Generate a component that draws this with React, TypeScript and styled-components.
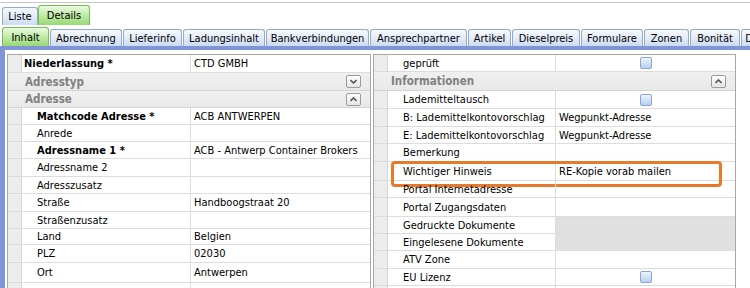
import React from "react";
import styled, { createGlobalStyle } from "styled-components";

const Global = createGlobalStyle`
  html, body { margin: 0; padding: 0; background: #ffffff; }
  body {
    font-family: "DejaVu Sans Condensed", "DejaVu Sans", sans-serif;
    font-stretch: condensed;
    font-size: 11px;
    color: #000;
  }
  * { box-sizing: border-box; }
`;

const Page = styled.div`
  width: 750px;
  height: 288px;
  overflow: hidden;
  padding-top: 2px;
  background: #fff;
`;

const TopTabBar = styled.div`
  border-top: 1px solid #c6c6c6;
  height: 23px;
  display: flex;
  align-items: flex-end;
  padding-left: 2px;
`;

const SubTabBar = styled.div`
  margin-top: 2px;
  height: 19px;
  display: flex;
  align-items: flex-end;
  gap: 1px;
  padding-left: 2px;
  white-space: nowrap;
  overflow: hidden;
`;

const Tab = styled.div<{ $active?: boolean; $h: number; $w: number }>`
  flex: none;
  width: ${(p) => p.$w}px;
  height: ${(p) => (p.$active ? p.$h + 2 : p.$h)}px;
  display: flex;
  align-items: center;
  justify-content: center;
  border: 1px solid ${(p) => (p.$active ? "#78bd55" : "#93aacb")};
  border-bottom: none;
  border-radius: 3px 3px 0 0;
  background: ${(p) =>
    p.$active
      ? "linear-gradient(#eafbe0 0%, #c4ecac 45%, #98d873 100%)"
      : "linear-gradient(#f6f9fe 0%, #e3ecf9 50%, #c9dbf3 100%)"};
  color: #000;
  font-size: 11px;
`;

const Frame = styled.div`
  border-top: 4px solid #7f95d8;
  border-left: 5px solid #7f95d8;
  padding: 4px 0 0 2px;
  display: flex;
  gap: 2px;
  height: 250px;
`;

const Panel = styled.div<{ $w: number; $labelW: number }>`
  --label-w: ${(p) => p.$labelW}px;
  width: ${(p) => p.$w}px;
  flex: none;
  border: 1px solid #a7a7a7;
  border-bottom: none;
  background: #fff;
  display: flex;
  flex-direction: column;
`;

const Row = styled.div<{ $h: number }>`
  position: relative;
  display: flex;
  height: ${(p) => p.$h}px;
  flex: none;
  border-bottom: 1px solid #dcdcdc;
`;

const Gutter = styled.div`
  width: 14px;
  flex: none;
  background: #ececec;
  border-right: 1px solid #d6d6d6;
`;

const Label = styled.div<{ $indent: number; $bold?: boolean }>`
  width: var(--label-w);
  flex: none;
  padding-left: ${(p) => p.$indent}px;
  display: flex;
  align-items: center;
  border-right: 1px solid #dcdcdc;
  font-weight: ${(p) => (p.$bold ? "bold" : "normal")};
  white-space: nowrap;
  overflow: hidden;
`;

const Value = styled.div<{ $shaded?: boolean; $center?: boolean }>`
  flex: 1;
  padding-left: 3px;
  display: flex;
  align-items: center;
  justify-content: ${(p) => (p.$center ? "center" : "flex-start")};
  background: ${(p) => (p.$shaded ? "#e0e0e0" : "transparent")};
  white-space: nowrap;
  overflow: hidden;
`;

const GroupRow = styled.div<{ $h: number }>`
  display: flex;
  align-items: center;
  justify-content: space-between;
  height: ${(p) => p.$h}px;
  flex: none;
  padding: 0 9px 0 17px;
  background: linear-gradient(#f0f0f0, #e9e9e9);
  border-bottom: 1px solid #d4d4d4;
  color: #808080;
  font-weight: bold;
  font-size: 11.5px;
`;

const ToggleButton = styled.div`
  width: 15px;
  height: 13px;
  border: 1px solid #9c9c9c;
  border-radius: 2px;
  background: linear-gradient(#ffffff, #e4e4e4);
  display: flex;
  align-items: center;
  justify-content: center;
`;

const CheckBox = styled.div`
  width: 12px;
  height: 12px;
  border: 1px solid #87a6d6;
  border-radius: 2px;
  background: linear-gradient(#eef4fd, #b8cfef);
  margin-left: -3px;
`;

const Highlight = styled.div`
  position: absolute;
  left: 17px;
  top: -1px;
  width: 331px;
  height: 26px;
  border: 3px solid #e8792a;
  border-radius: 4px;
  pointer-events: none;
`;

const Chevron = ({ up }: { up?: boolean }) => (
  <svg width="7" height="5" viewBox="0 0 7 5">
    <polyline
      points={up ? "0.5,4 3.5,1 6.5,4" : "0.5,1 3.5,4 6.5,1"}
      fill="none"
      stroke="#555"
      strokeWidth="1.6"
    />
  </svg>
);

type Item =
  | { kind: "group"; text: string; h: number; up?: boolean }
  | {
      kind: "row";
      label: string;
      value?: string;
      h: number;
      indent: number;
      bold?: boolean;
      check?: boolean;
      shaded?: boolean;
      highlight?: boolean;
    };

const leftItems: Item[] = [
  { kind: "row", label: "Niederlassung *", value: "CTD GMBH", h: 18, indent: 2, bold: true },
  { kind: "group", text: "Adresstyp", h: 18 },
  { kind: "group", text: "Adresse", h: 17, up: true },
  { kind: "row", label: "Matchcode Adresse *", value: "ACB ANTWERPEN", h: 17, indent: 15, bold: true },
  { kind: "row", label: "Anrede", h: 17, indent: 15 },
  { kind: "row", label: "Adressname 1 *", value: "ACB - Antwerp Container Brokers", h: 17, indent: 15, bold: true },
  { kind: "row", label: "Adressname 2", h: 18, indent: 15 },
  { kind: "row", label: "Adresszusatz", h: 17, indent: 15 },
  { kind: "row", label: "Straße", value: "Handboogstraat 20", h: 18, indent: 15 },
  { kind: "row", label: "Straßenzusatz", h: 17, indent: 15 },
  { kind: "row", label: "Land", value: "Belgien", h: 16, indent: 15 },
  { kind: "row", label: "PLZ", value: "02030", h: 18, indent: 15 },
  { kind: "row", label: "Ort", value: "Antwerpen", h: 20, indent: 15 },
  { kind: "row", label: "", h: 18, indent: 15 },
];

const rightItems: Item[] = [
  { kind: "row", label: "geprüft", h: 17, indent: 15, check: true },
  { kind: "group", text: "Informationen", h: 19, up: true },
  { kind: "row", label: "Lademitteltausch", h: 18, indent: 15, check: true },
  { kind: "row", label: "B: Lademittelkontovorschlag", value: "Wegpunkt-Adresse", h: 18, indent: 15 },
  { kind: "row", label: "E: Lademittelkontovorschlag", value: "Wegpunkt-Adresse", h: 17, indent: 15 },
  { kind: "row", label: "Bemerkung", h: 18, indent: 15 },
  { kind: "row", label: "Wichtiger Hinweis", value: "RE-Kopie vorab mailen", h: 19, indent: 15, highlight: true },
  { kind: "row", label: "Portal Internetadresse", h: 17, indent: 15 },
  { kind: "row", label: "Portal Zugangsdaten", h: 19, indent: 15 },
  { kind: "row", label: "Gedruckte Dokumente", h: 17, indent: 15, shaded: true },
  { kind: "row", label: "Eingelesene Dokumente", h: 17, indent: 15, shaded: true },
  { kind: "row", label: "ATV Zone", h: 18, indent: 15 },
  { kind: "row", label: "EU Lizenz", h: 17, indent: 15, check: true },
  { kind: "row", label: "", h: 17, indent: 15 },
];

const PanelView = ({ items, w, labelW }: { items: Item[]; w: number; labelW: number }) => (
  <Panel $w={w} $labelW={labelW}>
    {items.map((it, i) =>
      it.kind === "group" ? (
        <GroupRow key={i} $h={it.h}>
          <span>{it.text}</span>
          <ToggleButton>
            <Chevron up={it.up} />
          </ToggleButton>
        </GroupRow>
      ) : (
        <Row key={i} $h={it.h}>
          <Gutter />
          <Label $indent={it.indent} $bold={it.bold}>
            {it.label}
          </Label>
          <Value $shaded={it.shaded} $center={it.check}>
            {it.check ? <CheckBox /> : it.value}
          </Value>
          {it.highlight && <Highlight />}
        </Row>
      )
    )}
  </Panel>
);

const topTabs = [
  { t: "Liste", w: 36 },
  { t: "Details", w: 52, active: true },
];

const subTabs = [
  { t: "Inhalt", w: 47 },
  { t: "Abrechnung", w: 72 },
  { t: "Lieferinfo", w: 59 },
  { t: "Ladungsinhalt", w: 82 },
  { t: "Bankverbindungen", w: 103 },
  { t: "Ansprechpartner", w: 97 },
  { t: "Artikel", w: 43 },
  { t: "Dieselpreis", w: 68 },
  { t: "Formulare", w: 62 },
  { t: "Zonen", w: 45 },
  { t: "Bonität", w: 50 },
  { t: "D", w: 16 },
];

export default function App() {
  return (
    <>
      <Global />
      <Page>
        <TopTabBar>
          {topTabs.map((t) => (
            <Tab key={t.t} $h={18} $w={t.w} $active={t.active}>
              {t.t}
            </Tab>
          ))}
        </TopTabBar>
        <SubTabBar>
          {subTabs.map((t, i) => (
            <Tab key={t.t} $h={17} $w={t.w} $active={i === 0}>
              {t.t}
            </Tab>
          ))}
        </SubTabBar>
        <Frame>
          <PanelView items={leftItems} w={364} labelW={169} />
          <PanelView items={rightItems} w={363} labelW={168} />
        </Frame>
      </Page>
    </>
  );
}
